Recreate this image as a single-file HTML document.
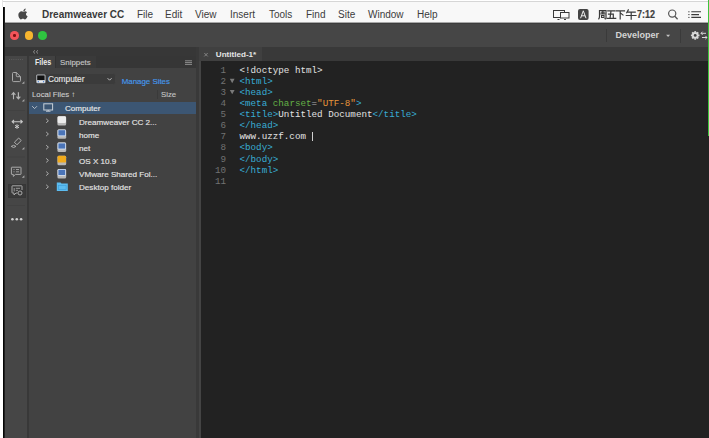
<!DOCTYPE html>
<html><head><meta charset="utf-8">
<style>
*{margin:0;padding:0;box-sizing:border-box}
html,body{width:709px;height:438px;overflow:hidden;background:#ffffff}
body{position:relative;font-family:"Liberation Sans",sans-serif}
.a{position:absolute}
.t{position:absolute;white-space:pre;line-height:1}
.menu{font-size:10px;color:#3c3c3c;top:10.4px}
.tr{font-size:8.1px;color:#e4e4e4;left:79px;-webkit-text-stroke:0.15px #e4e4e4}
.code{font-family:"Liberation Mono",monospace;font-size:9.24px;line-height:11.14px;white-space:pre}
svg.ov{position:absolute;left:0;top:0}
.tg{color:#38acd4}
</style></head><body>
<!-- top edge -->
<div class="a" style="left:3px;top:1px;width:706px;height:1px;background:#d6d6d6"></div>
<div class="a" style="left:2px;top:0;width:1px;height:7px;background:#e6e6e6"></div>
<!-- menubar -->
<div class="a" style="left:5px;top:2px;width:703px;height:20px;background:#f8f8f8"></div>
<div class="a" style="left:5px;top:22px;width:703px;height:1px;background:#a8a8a8"></div>
<!-- black left border -->
<div class="a" style="left:3px;top:7px;width:1px;height:431px;background:#050505"></div><div class="a" style="left:4px;top:7px;width:1px;height:431px;background:#1e1e1e"></div>
<!-- green right edge -->

<div class="t menu" style="left:42px;font-weight:bold;color:#3a3a3a">Dreamweaver CC</div>
<div class="t menu" style="left:137px">File</div>
<div class="t menu" style="left:165px">Edit</div>
<div class="t menu" style="left:195px">View</div>
<div class="t menu" style="left:230px">Insert</div>
<div class="t menu" style="left:269px">Tools</div>
<div class="t menu" style="left:306px">Find</div>
<div class="t menu" style="left:338px">Site</div>
<div class="t menu" style="left:368px">Window</div>
<div class="t menu" style="left:417px">Help</div>
<div class="t menu" style="left:637px;font-size:10.4px;top:9.6px;font-weight:bold;color:#3e3e3e;-webkit-text-stroke:0.2px #3e3e3e;transform:scaleX(0.865);transform-origin:0 0">7:12</div>

<!-- title bar -->
<div class="a" style="left:5px;top:23px;width:703px;height:24px;background:#464646;border-top:1px solid #3c3c3c"></div>
<div class="a" style="left:10.4px;top:31px;width:8.5px;height:8.5px;border-radius:50%;background:#f2545a"></div>
<div class="a" style="left:13.3px;top:33.9px;width:2.7px;height:2.7px;border-radius:50%;background:#7a1010"></div>
<div class="a" style="left:24.5px;top:31px;width:8.5px;height:8.5px;border-radius:50%;background:#f7b52e"></div>
<div class="a" style="left:38.3px;top:31px;width:8.5px;height:8.5px;border-radius:50%;background:#2fc440"></div>
<div class="a" style="left:606px;top:29px;width:1px;height:13px;background:#3a3a3a"></div>
<div class="t" style="left:615.5px;top:30.6px;font-size:9px;font-weight:bold;color:#d4d4d4">Developer</div>
<div class="a" style="left:680px;top:28.5px;width:1px;height:14px;background:#3a3a3a"></div>

<!-- left toolbar column -->
<div class="a" style="left:5px;top:47px;width:193px;height:9px;background:#373737"></div>
<div class="a" style="left:5px;top:56px;width:22px;height:382px;background:#464646"></div>
<div class="a" style="left:27px;top:56px;width:2px;height:382px;background:#383838"></div>
<div class="a" style="left:8.2px;top:183.5px;width:17.4px;height:14px;background:#393939;border:1px solid #373737"></div>

<!-- files panel -->
<div class="a" style="left:29px;top:56px;width:167px;height:11.5px;background:#363636"></div>
<div class="a" style="left:29px;top:56px;width:26px;height:11.5px;background:#424242"></div>
<div class="a" style="left:55px;top:56px;width:1px;height:11.5px;background:#333"></div><div class="a" style="left:56px;top:56px;width:40px;height:11.5px;background:#3a3a3a"></div>
<div class="a" style="left:29px;top:67.5px;width:167px;height:370.5px;background:#424242"></div>
<div class="t" style="left:34.6px;top:59px;font-size:8.2px;font-weight:bold;color:#eaeaea;transform:scaleX(0.87);transform-origin:0 0">Files</div>
<div class="t" style="left:60px;top:58.8px;font-size:7.9px;color:#c4c4c4;-webkit-text-stroke:0.15px #c4c4c4">Snippets</div>
<div class="a" style="left:33.5px;top:72.8px;width:82.5px;height:12.6px;border-radius:2.5px;background:#3b3b3b;border:1px solid #424242"></div>
<div class="t" style="left:48px;top:75.2px;font-size:8.3px;color:#e4e4e4;-webkit-text-stroke:0.15px #e4e4e4">Computer</div>
<div class="t" style="left:121.7px;top:78px;font-size:7.9px;color:#4499ee;-webkit-text-stroke:0.15px #4499ee">Manage Sites</div>
<div class="t" style="left:32px;top:91px;font-size:7.8px;color:#cccccc;-webkit-text-stroke:0.12px #cccccc">Local Files ↑</div>
<div class="a" style="left:157px;top:90px;width:1px;height:9px;background:#3a3a3a"></div>
<div class="t" style="left:161px;top:91px;font-size:7.8px;color:#c4c4c4;-webkit-text-stroke:0.12px #c4c4c4">Size</div>
<div class="a" style="left:29px;top:102px;width:168px;height:12px;background:#3c5673"></div>
<div class="t tr" style="left:65px;top:105px;color:#e8e8e8">Computer</div>
<div class="t tr" style="top:118.5px">Dreamweaver CC 2...</div>
<div class="t tr" style="top:131.5px">home</div>
<div class="t tr" style="top:144.7px">net</div>
<div class="t tr" style="top:158px">OS X 10.9</div>
<div class="t tr" style="top:171.2px">VMware Shared Fol...</div>
<div class="t tr" style="top:184.4px">Desktop folder</div>
<!-- panel separator -->
<div class="a" style="left:196px;top:47px;width:3px;height:391px;background:#393939"></div><div class="a" style="left:199px;top:61px;width:2px;height:377px;background:#444"></div>

<!-- code panel -->
<div class="a" style="left:199px;top:47px;width:510px;height:14px;background:#393939"></div>
<div class="a" style="left:199px;top:47px;width:63px;height:14px;background:#404040"></div>
<div class="t" style="left:215.8px;top:51px;font-size:8.1px;font-weight:bold;color:#e4e4e4">Untitled-1*</div>
<div class="a" style="left:201px;top:61px;width:508px;height:377px;background:#222222"></div>
<div class="code a" style="left:200px;top:64.5px;width:26px;text-align:right;color:#727272;-webkit-text-stroke:0">1
2
3
4
5
6
7
8
9
10
11</div>
<div class="code a" style="left:239.5px;top:64.5px;color:#e2e2e2">&lt;!doctype html&gt;
<span class="tg">&lt;html&gt;</span>
<span class="tg">&lt;head&gt;</span>
<span class="tg">&lt;meta</span> <span style="color:#62b046">charset</span><span style="color:#b0b0b0">=</span><span style="color:#e8963a">"UTF-8"</span><span class="tg">&gt;</span>
<span class="tg">&lt;title&gt;</span>Untitled Document<span class="tg">&lt;/title&gt;</span>
<span class="tg">&lt;/head&gt;</span>
www.uzzf.com 
<span class="tg">&lt;body&gt;</span>
<span class="tg">&lt;/body&gt;</span>
<span class="tg">&lt;/html&gt;</span>
</div>
<div class="a" style="left:312px;top:132px;width:1px;height:9px;background:#d0d0d0"></div>

<!-- icon overlay -->
<svg class="ov" width="709" height="438" viewBox="0 0 709 438">
<!-- apple logo -->
<g transform="translate(19.3,8.2) scale(0.84,0.88)" fill="#484848">
<path d="M7.6 0.4c0.1 0.9-0.3 1.7-0.8 2.2-0.5 0.6-1.3 1-2 0.9-0.1-0.8 0.3-1.6 0.8-2.1 0.5-0.6 1.4-1 2-1z M9.9 9.2c-0.3 0.7-0.5 1-0.9 1.6-0.6 0.9-1.4 1.9-2.4 1.9-0.9 0-1.1-0.6-2.3-0.6-1.2 0-1.5 0.6-2.3 0.6-1 0-1.7-1-2.3-1.8C-1.4 8.6-1.6 5.9 0.3 4.6 0.9 3.9 1.8 3.5 2.6 3.5c0.9 0 1.5 0.5 2.2 0.5 0.7 0 1.2-0.5 2.2-0.5 0.8 0 1.6 0.4 2.2 1.2-2 1.1-1.6 3.9 0.7 4.5z"/>
</g>
<!-- mirror icon -->
<g fill="none" stroke="#3a3a3a" stroke-width="1">
<rect x="553.5" y="10.5" width="11" height="7"/>
<rect x="560.5" y="12.5" width="8.5" height="5.5" fill="#f8f8f8"/>
<path d="M557.5 19.5h2M564 19.5h2" stroke-width="1"/>
</g>
<rect x="578" y="9" width="10.6" height="11" rx="2" fill="#454545"/>
<path d="M580.6 18.2 L583.3 10.8 L586 18.2 M581.6 15.8 H585" stroke="#f0f0f0" stroke-width="1" fill="none"/>
<!-- CJK 周五下午 -->
<g fill="none" stroke="#3a3a3a" stroke-width="1.2" stroke-linecap="square">
<!-- 周 -->
<path d="M599.5 10.5 V16 Q599.5 18 598.8 18.8 M599.5 10.5 H606 V18.5 Q606 19 605 18.7 M601.3 12.2 H604.3 M602.8 11.5 V13.8 M601 13.8 H604.6 M601.6 15.5 V17.5 H604 V15.5 Z"/>
<!-- 五 -->
<path d="M607.8 10.8 H615 M611 10.8 L610 18.3 M608.5 14.2 H613.3 V18.3 M607.3 18.3 H615.7"/>
<!-- 下 -->
<path d="M616.4 10.8 H624.5 M620.2 10.8 V19 M621 13.5 L623 15"/>
<!-- 午 -->
<path d="M628.3 9.9 L626.7 12.8 M627.6 12.2 H635.2 M626.3 15.5 H636 M631.2 12.2 V19.2"/>
</g>
<!-- search -->
<circle cx="672.2" cy="13.6" r="3.6" fill="none" stroke="#555" stroke-width="1.2"/>
<path d="M674.8 16.2 L677.6 19.2" stroke="#555" stroke-width="1.3"/>
<!-- list -->
<g stroke="#3a3a3a" stroke-width="1.1">
<path d="M688.3 11.8h1.2M688.3 14.6h1.2M688.3 17.4h1.2" stroke-width="1"/>
<path d="M691.3 11.8H701M691.3 14.6H699M691.3 17.4H701"/>
</g>
<!-- menubar bottom shade -->
<!-- title bar icons -->
<path d="M666.1 34.7 H670.1 L668.1 36.9 Z" fill="#c4c4c4"/>
<g transform="translate(695.2,35.4)" fill="#d8d8d8">
<circle r="3.3"/>
<path d="M-0.9 -4.3h1.8v1.5h-1.8z" transform="rotate(0)"/>
<path d="M-0.9 -4.3h1.8v1.5h-1.8z" transform="rotate(45)"/>
<path d="M-0.9 -4.3h1.8v1.5h-1.8z" transform="rotate(90)"/>
<path d="M-0.9 -4.3h1.8v1.5h-1.8z" transform="rotate(135)"/>
<path d="M-0.9 -4.3h1.8v1.5h-1.8z" transform="rotate(180)"/>
<path d="M-0.9 -4.3h1.8v1.5h-1.8z" transform="rotate(225)"/>
<path d="M-0.9 -4.3h1.8v1.5h-1.8z" transform="rotate(270)"/>
<path d="M-0.9 -4.3h1.8v1.5h-1.8z" transform="rotate(315)"/>
<circle r="1.4" fill="#404040"/>
</g>
<g stroke="#d8d8d8" stroke-width="1" fill="none">
<path d="M701 33.3 H706 M702.6 31.7 L701 33.3 L702.6 34.9"/>
<path d="M702 37.5 H707 M705.4 35.9 L707 37.5 L705.4 39.1"/>
</g>
<!-- << -->
<path d="M35 50.3 L33.3 51.9 L35 53.5 M38 50.3 L36.3 51.9 L38 53.5" stroke="#909090" stroke-width="1" fill="none"/>
<!-- grip -->
<path d="M9 59.5 H23" stroke="#5c5c5c" stroke-width="1" stroke-dasharray="1 1.2"/>
<!-- toolbar icons -->
<g fill="none" stroke="#b4b4b4" stroke-width="0.9">
<path d="M12.5 73.5 Q12.5 72.5 13.5 72.5 H16.3 L20.5 76.7 V80.6 Q20.5 81.6 19.5 81.6 H13.5 Q12.5 81.6 12.5 80.6 Z M16.3 72.5 V75.7 Q16.3 76.7 17.3 76.7 H20.5"/>
<path d="M13.5 99.2 V92.8 M11.6 94.8 L13.5 92.6 L15.4 94.8" stroke-width="1.1"/>
<path d="M18.4 92.2 V98.6 M16.5 96.6 L18.4 98.8 L20.3 96.6" stroke-width="1.2"/>
<path d="M12.2 121.7 H22.3 M14 120 L12.2 121.7 L14 123.4 M20.5 120 L22.3 121.7 L20.5 123.4" stroke-width="1.1" stroke="#c8c8c8"/>
<path d="M17 124.3 V128.9 M15 125.4 L19 127.8 M19 125.4 L15 127.8" stroke="#c8c8c8" stroke-width="1"/>
<rect x="-3" y="-1.8" width="6" height="3.6" transform="translate(17.8,141.4) rotate(-45)"/>
<path d="M11.2 146.4 Q13.6 144.2 16 146.4 Q13.6 148.6 11.2 146.4 Z" stroke-width="0.9"/>
<path d="M11.8 167.2 H20.6 Q21 167.2 21 167.6 V174 Q21 174.4 20.6 174.4 H15.5 L13.3 176.4 V174.4 H11.8 Q11.4 174.4 11.4 174 V167.6 Q11.4 167.2 11.8 167.2 Z"/>
<path d="M13.5 169.5 H14.5 M16 169.5 H19 M13.5 171.8 H14.5 M16 171.8 H19" stroke-width="0.8"/>
<path d="M12.4 185.8 H21.6 Q22 185.8 22 186.2 V190 M17.5 193 H16 L14 195 V193 H12.4 Q12 193 12 192.6 V186.2 Q12 185.8 12.4 185.8" />
<path d="M14.2 188 V191.5 M15.8 188.3 H20 M15.8 190.3 H18" stroke-width="0.8"/>
<circle cx="20" cy="193" r="2" stroke-width="0.9"/>
</g>
<g fill="#a8a8a8">
<path d="M21.8 83.8 L24.4 83.8 L24.4 81.2 Z"/>
<path d="M21.8 101.6 L24.4 101.6 L24.4 99 Z"/>
<path d="M21.8 149.6 L24.4 149.6 L24.4 147 Z"/>
<path d="M21.8 177.8 L24.4 177.8 L24.4 175.2 Z"/>
</g>
<path d="M7 110.5 H25 M7 157 H25 M7 205.5 H25" stroke="#414141" stroke-width="1"/>
<g fill="#cfcfcf"><circle cx="12.4" cy="219.2" r="1.3"/><circle cx="16.8" cy="219.2" r="1.3"/><circle cx="21.1" cy="219.2" r="1.3"/></g>
<!-- hamburger -->
<path d="M185 60.8 H192 M185 62.6 H192 M185 64.4 H192" stroke="#8c8c8c" stroke-width="1"/>
<!-- dropdown computer icon -->
<rect x="36.3" y="74.5" width="9.2" height="8.8" rx="1.2" fill="#c4c8cc"/>
<rect x="37.2" y="75.4" width="7.4" height="4.6" fill="#111"/>
<rect x="37.2" y="81" width="7.4" height="1.4" fill="#e8eaee"/>
<circle cx="38.3" cy="81.7" r="0.6" fill="#3a7ad8"/><circle cx="43.5" cy="81.7" r="0.6" fill="#3a7ad8"/>
<path d="M107.6 78.2 L109.6 80.2 L111.6 78.2" stroke="#c0c0c0" stroke-width="1" fill="none"/>
<!-- selected row icons -->
<path d="M32.2 106.2 L34.6 108.6 L37 106.2" stroke="#b8c0c8" stroke-width="1" fill="none"/>
<rect x="43.8" y="103.8" width="8.8" height="6.2" fill="none" stroke="#c8d0d8" stroke-width="1"/>
<path d="M46 111.2 H50.5 M48.2 110 V111" stroke="#c8d0d8" stroke-width="1"/>
<!-- tree chevrons -->
<g stroke="#b0b0b0" stroke-width="1" fill="none">
<path d="M46.2 118.8 L48.4 120.8 L46.2 122.8"/>
<path d="M46.2 132 L48.4 134 L46.2 136"/>
<path d="M46.2 145.2 L48.4 147.2 L46.2 149.2"/>
<path d="M46.2 158.4 L48.4 160.4 L46.2 162.4"/>
<path d="M46.2 171.6 L48.4 173.6 L46.2 175.6"/>
<path d="M46.2 184.8 L48.4 186.8 L46.2 188.8"/>
</g>
<!-- disk icons -->
<g>
<rect x="57.4" y="116.2" width="8.8" height="9.4" rx="1.5" fill="#b8b8b8"/>
<rect x="57.6" y="116.2" width="8.4" height="6.8" rx="1.2" fill="#ececec"/>
<rect x="57.4" y="129.4" width="8.8" height="9.4" rx="1.5" fill="#b8b8b8"/>
<rect x="57.6" y="129.4" width="8.4" height="6.8" rx="1.2" fill="#d8e2f0"/>
<rect x="58.4" y="130.2" width="6.8" height="5.2" fill="#4a74b8"/>
<rect x="57.4" y="142.6" width="8.8" height="9.4" rx="1.5" fill="#b8b8b8"/>
<rect x="57.6" y="142.6" width="8.4" height="6.8" rx="1.2" fill="#d8e2f0"/>
<rect x="58.4" y="143.4" width="6.8" height="5.2" fill="#4a74b8"/>
<rect x="57.4" y="155.8" width="8.8" height="9.4" rx="1.5" fill="#b8b8b8"/>
<rect x="57.6" y="155.8" width="8.4" height="6.8" rx="1.2" fill="#f0aa1c"/>
<rect x="57.4" y="169" width="8.8" height="9.4" rx="1.5" fill="#b8b8b8"/>
<rect x="57.6" y="169" width="8.4" height="6.8" rx="1.2" fill="#d8e2f0"/>
<rect x="58.4" y="169.8" width="6.8" height="5.2" fill="#4a74b8"/>
<path d="M56.8 182.4 H60.5 L61.5 183.6 H67.8 V191 H56.8 Z" fill="#5cbcf0"/>
<rect x="58.5" y="185.5" width="7.6" height="4" fill="none" stroke="#3a9cd8" stroke-width="0.6"/>
</g>
<!-- tab close x -->
<path d="M204.3 53 L207.7 56.4 M207.7 53 L204.3 56.4" stroke="#8a8a8a" stroke-width="0.9"/>
<!-- fold arrows -->
<path d="M229.8 78.8 H234.6 L232.2 83.2 Z M229.8 89.9 H234.6 L232.2 94.3 Z" fill="#7a7a7a"/>
</svg>
<div class="a" style="left:708px;top:0;width:1px;height:136px;background:#3cc43c"></div>
</body></html>
